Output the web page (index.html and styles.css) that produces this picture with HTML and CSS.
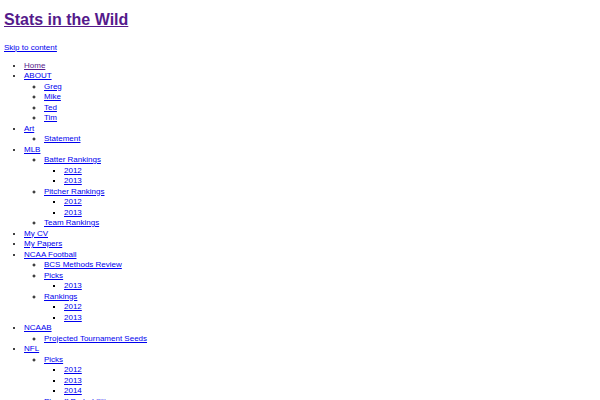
FILE: index.html
```html
<!DOCTYPE html>
<html>
<head>
<meta charset="utf-8">
<title>Stats in the Wild</title>
<link rel="stylesheet" href="styles.css">
</head>
<body>
<header class="site-header">
  <h1 class="site-title"><a class="visited" href="#">Stats in the Wild</a></h1>
  <a class="skip-link" href="#content">Skip to content</a>
</header>
<nav class="menu">
  <ul>
    <li><a class="visited" href="#">Home</a></li>
    <li><a href="#">ABOUT</a>
      <ul>
        <li><a href="#">Greg</a></li>
        <li><a href="#">Mike</a></li>
        <li><a href="#">Ted</a></li>
        <li><a href="#">Tim</a></li>
      </ul>
    </li>
    <li><a href="#">Art</a>
      <ul>
        <li><a href="#">Statement</a></li>
      </ul>
    </li>
    <li><a href="#">MLB</a>
      <ul>
        <li><a href="#">Batter Rankings</a>
          <ul>
            <li><a href="#">2012</a></li>
            <li><a href="#">2013</a></li>
          </ul>
        </li>
        <li><a href="#">Pitcher Rankings</a>
          <ul>
            <li><a href="#">2012</a></li>
            <li><a href="#">2013</a></li>
          </ul>
        </li>
        <li><a href="#">Team Rankings</a></li>
      </ul>
    </li>
    <li><a href="#">My CV</a></li>
    <li><a href="#">My Papers</a></li>
    <li><a href="#">NCAA Football</a>
      <ul>
        <li><a href="#">BCS Methods Review</a></li>
        <li><a href="#">Picks</a>
          <ul>
            <li><a href="#">2013</a></li>
          </ul>
        </li>
        <li><a href="#">Rankings</a>
          <ul>
            <li><a href="#">2012</a></li>
            <li><a href="#">2013</a></li>
          </ul>
        </li>
      </ul>
    </li>
    <li><a href="#">NCAAB</a>
      <ul>
        <li><a href="#">Projected Tournament Seeds</a></li>
      </ul>
    </li>
    <li><a href="#">NFL</a>
      <ul>
        <li><a href="#">Picks</a>
          <ul>
            <li><a href="#">2012</a></li>
            <li><a href="#">2013</a></li>
            <li><a href="#">2014</a></li>
          </ul>
        </li>
        <li><a href="#">Playoff Probabilities</a></li>
      </ul>
    </li>
  </ul>
</nav>
</body>
</html>
```

FILE: styles.css
```css
html, body {
  background: #ffffff;
}
body {
  margin: 0;
  padding: 0 4px;
  font-family: "Liberation Sans", Arial, sans-serif;
  font-size: 8px;
  line-height: 10.5px;
  color: #000000;
}
a {
  color: #0000ee;
}
a.visited {
  color: #551a8b;
}
.site-title {
  font-size: 16px;
  line-height: 18px;
  font-weight: bold;
  margin: 11px 0 0;
}
.skip-link {
  display: inline-block;
  margin-top: 14px;
}
.menu ul {
  margin: 0;
  padding-left: 20px;
  list-style-type: disc;
}
.menu ul ul {
  list-style-type: circle;
}
.menu ul ul ul {
  list-style-type: square;
}
.menu > ul {
  margin-top: 7px;
}
```
